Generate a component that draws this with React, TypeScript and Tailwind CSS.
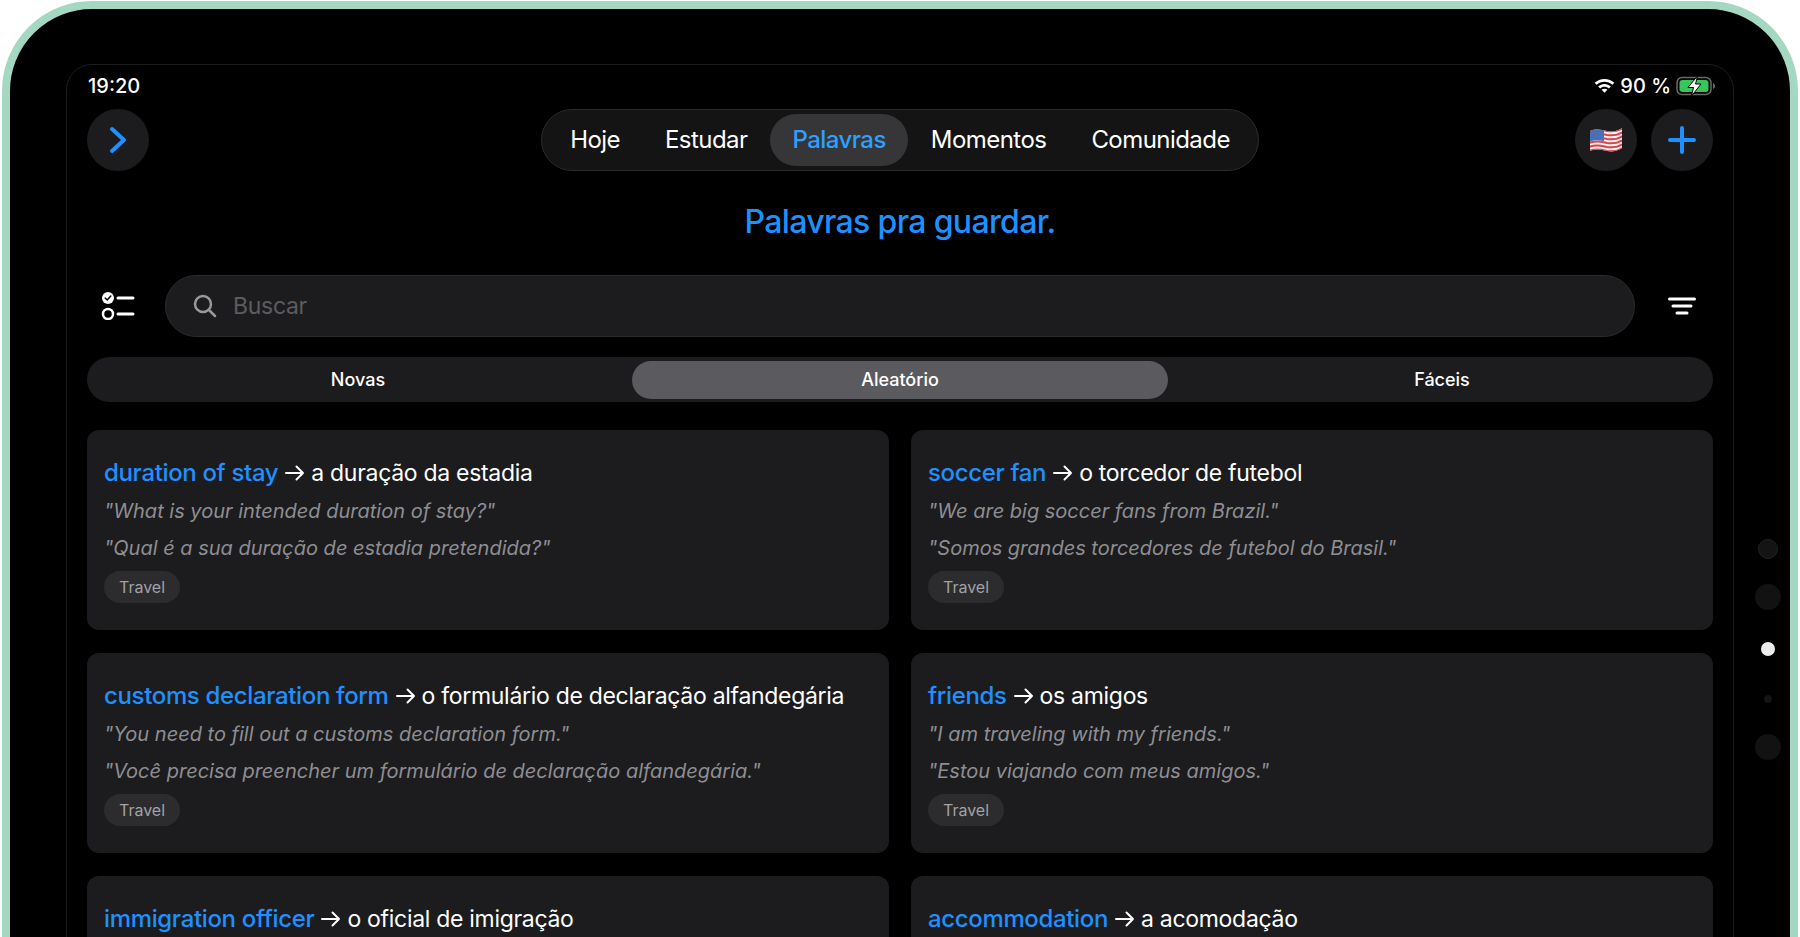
import React from "react";

const font = { fontFamily: "Inter, 'Liberation Sans', sans-serif" };

function RoundBtn({ children }: { children: React.ReactNode }) {
  return <div className="w-[62px] h-[62px] rounded-full bg-[#1c1c1e] flex items-center justify-center shrink-0">{children}</div>;
}

function Flag() {
  return (
    <svg width="34" height="26" viewBox="0 0 34 26">
      <defs>
        <clipPath id="fl"><path d="M1 4 C8 1 13 3 18 4 C24 5 29 4 33 1 L33 21 C28 24 24 25 18 24 C13 23 8 21 1 24 Z" /></clipPath>
      </defs>
      <g clipPath="url(#fl)">
        <rect width="34" height="26" fill="#f2f2f2" />
        {[2, 6, 10, 14, 18, 22].map((y) => (
          <path key={y} d={`M0 ${y + 2} C8 ${y - 1} 13 ${y + 1} 18 ${y + 2} C24 ${y + 3} 29 ${y + 2} 34 ${y - 1}`} stroke="#d8434f" strokeWidth="2" fill="none" />
        ))}
        <path d="M1 4 C5 2.5 10 2.5 15 3.5 L15 14 C10 13 5 13 1 14.5 Z" fill="#4a6fb5" />
      </g>
    </svg>
  );
}

function Card({ en, pt, q1, q2 }: { en: string; pt: string; q1?: string; q2?: string }) {
  return (
    <div className="h-[200px] bg-[#1c1c1e] rounded-[12px] pl-[17px] pt-[28px]">
      <div className="flex items-center h-[30px] text-[23px] leading-[30px] tracking-[-0.3px] text-white whitespace-nowrap">
        <span className="text-[#1e90ff] font-medium text-[24px] tracking-[-0.35px]">{en}</span>
        <svg className="mx-[6px]" width="21" height="18" viewBox="0 0 21 18" fill="none" stroke="#fff" strokeWidth="2" strokeLinecap="round" strokeLinejoin="round">
          <path d="M2 9H19M12.500 2.500 19 9l-6.500 6.500" />
        </svg>
        <span>{pt}</span>
      </div>
      {q1 && (
        <>
          <div className="mt-[9px] text-[20px] leading-[28px] italic text-[#8e8e93] whitespace-nowrap">{q1}</div>
          <div className="mt-[9px] text-[20px] leading-[28px] italic text-[#8e8e93] whitespace-nowrap">{q2}</div>
          <div className="mt-[9px] w-[76px] h-[32px] rounded-full bg-[#2c2c2e] flex items-center justify-center text-[16px] text-[#a1a1a6]">Travel</div>
        </>
      )}
    </div>
  );
}

const cards = [
  { en: "duration of stay", pt: "a duração da estadia", q1: "\"What is your intended duration of stay?\"", q2: "\"Qual é a sua duração de estadia pretendida?\"" },
  { en: "soccer fan", pt: "o torcedor de futebol", q1: "\"We are big soccer fans from Brazil.\"", q2: "\"Somos grandes torcedores de futebol do Brasil.\"" },
  { en: "customs declaration form", pt: "o formulário de declaração alfandegária", q1: "\"You need to fill out a customs declaration form.\"", q2: "\"Você precisa preencher um formulário de declaração alfandegária.\"" },
  { en: "friends", pt: "os amigos", q1: "\"I am traveling with my friends.\"", q2: "\"Estou viajando com meus amigos.\"" },
  { en: "immigration officer", pt: "o oficial de imigração" },
  { en: "accommodation", pt: "a acomodação" },
];

export default function App() {
  return (
    <div className="h-[937px] overflow-hidden bg-white" style={font}>
      <div className="relative mx-[2px] mt-[1px] h-[1000px] border-[8px] border-[#a5d8c2] rounded-t-[90px] bg-black pt-[55px] pl-[56px] pr-[56px]">
        {/* side sensors */}
        <div className="absolute left-[1743px] top-[530px] flex flex-col items-center w-[30px]">
          <div className="w-[20px] h-[20px] rounded-full bg-[#141414] border border-[#222]" />
          <div className="w-[26px] h-[26px] rounded-full bg-[#121212] mt-[25px]" />
          <div className="w-[14px] h-[14px] rounded-full bg-[#eee] mt-[32px]" />
          <div className="w-[8px] h-[8px] rounded-full bg-[#141414] mt-[39px]" />
          <div className="w-[26px] h-[26px] rounded-full bg-[#121212] mt-[31px]" />
        </div>

        <div className="h-[1000px] border border-[#1c1c1e] rounded-t-[26px] px-[20px] pt-[10px]">
          {/* status bar */}
          <div className="flex items-center justify-between h-[22px] text-[20px] text-white">
            <span className="font-medium pl-[1px]">19:20</span>
            <div className="flex items-center gap-[5px] -mr-[3px]">
              <svg width="21" height="16" viewBox="0 0 21 16" fill="#fff">
                <path d="M10.500 1C6.700 1 3.300 2.400.7 4.800l1.900 2C4.700 4.900 7.500 3.700 10.500 3.700s5.800 1.200 7.900 3.100l1.900-2C17.700 2.400 14.300 1 10.500 1Z" />
                <path d="M10.500 6C8.100 6 5.900 6.900 4.200 8.400l2 2c1.100-1 2.600-1.600 4.300-1.600s3.200.6 4.300 1.600l2-2C15.100 6.900 12.900 6 10.500 6Z" />
                <path d="M10.500 10.700c-1.100 0-2.100.4-2.900 1.100l2.900 3 2.900-3c-.8-.7-1.800-1.100-2.900-1.100Z" />
              </svg>
              <span className="font-medium">90 %</span>
              <svg width="40" height="20" viewBox="0 0 40 20" fill="none">
                <rect x="1" y="1.500" width="34" height="17" rx="5" stroke="#6a6a6a" strokeWidth="1.500" />
                <rect x="3.500" y="4" width="29" height="12" rx="3" fill="#34c759" />
                <path d="M37 7v6c1.300-.5 2-1.600 2-3s-.7-2.500-2-3Z" fill="#6a6a6a" />
                <path d="M21.500 0 12 11.500h5.500L15.500 20 25 8h-5.500Z" fill="#fff" stroke="#000" strokeWidth="1" />
              </svg>
            </div>
          </div>

          {/* nav */}
          <div className="flex items-center justify-between mt-[12px]">
            <div className="w-[138px]">
              <RoundBtn>
                <svg width="18" height="28" viewBox="0 0 18 28" fill="none" stroke="#1e90ff" strokeWidth="4" strokeLinecap="round" strokeLinejoin="round">
                  <path d="M3 3l12 11L3 25" />
                </svg>
              </RoundBtn>
            </div>
            <div className="h-[62px] w-[718px] rounded-full bg-[#141414] border border-[#2a2a2a] flex items-center justify-center text-[24px] tracking-[-0.55px] text-white">
              <span className="px-[22.5px]">Hoje</span>
              <span className="px-[22.5px]">Estudar</span>
              <span className="px-[22.5px] h-[52px] rounded-full bg-[#363638] flex items-center justify-center font-medium text-[#2ea0ff]">Palavras</span>
              <span className="px-[22.5px]">Momentos</span>
              <span className="px-[22.5px]">Comunidade</span>
            </div>
            <div className="flex gap-[14px]">
              <RoundBtn><Flag /></RoundBtn>
              <RoundBtn>
                <svg width="28" height="28" viewBox="0 0 28 28" stroke="#1e90ff" strokeWidth="4" strokeLinecap="round">
                  <path d="M14 2v24M2 14h24" />
                </svg>
              </RoundBtn>
            </div>
          </div>

          {/* heading */}
          <h1 className="mt-[29px] h-[44px] text-center text-[32px] leading-[44px] tracking-[-0.65px] font-medium text-[#1e90ff]">Palavras pra guardar.</h1>

          {/* search */}
          <div className="flex items-center mt-[31px]">
            <div className="w-[78px] pl-[14px] shrink-0">
              <svg width="34" height="28" viewBox="0 0 34 28" fill="none" stroke="#fff" strokeLinecap="round">
                <circle cx="7" cy="6" r="6" fill="#fff" stroke="none" />
                <path d="M4.200 6l2 2 3.600-4" stroke="#000" strokeWidth="1.500" />
                <circle cx="7" cy="22" r="5" strokeWidth="2.500" />
                <path d="M17 6h15M17 22h15" strokeWidth="3" />
              </svg>
            </div>
            <div className="flex-1 h-[62px] rounded-full bg-[#1c1c1e] border border-[#2a2a2c] flex items-center pl-[27px]">
              <svg width="24" height="24" viewBox="0 0 24 24" fill="none" stroke="#98989d" strokeWidth="2.500" strokeLinecap="round">
                <circle cx="10" cy="10" r="8" />
                <path d="M16 16l6 6" />
              </svg>
              <span className="ml-[16px] text-[23px] tracking-[-0.3px] text-[#5c5c60]">Buscar</span>
            </div>
            <div className="w-[78px] shrink-0 flex justify-end pr-[17px]">
              <svg width="28" height="18" viewBox="0 0 28 18" stroke="#fff" strokeWidth="3" strokeLinecap="round">
                <path d="M1.500 2h25M5 9h18M9 16h10" />
              </svg>
            </div>
          </div>

          {/* segments */}
          <div className="mt-[20px] h-[45px] rounded-full bg-[#1c1c1e] grid grid-cols-3 items-center text-[18px] font-medium text-white">
            <div className="text-center">Novas</div>
            <div className="h-[38px] rounded-full bg-[#5b5b5f] flex items-center justify-center mx-[3px]">Aleatório</div>
            <div className="text-center">Fáceis</div>
          </div>

          {/* cards */}
          <div className="grid grid-cols-2 gap-x-[22px] gap-y-[23px] mt-[28px]">
            {cards.map((c) => <Card key={c.en} {...c} />)}
          </div>
        </div>
      </div>
    </div>
  );
}
